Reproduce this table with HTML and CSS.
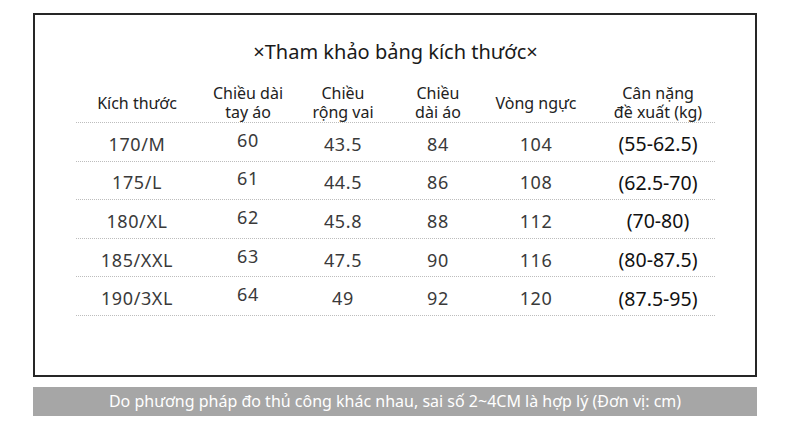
FILE: index.html
```html
<!DOCTYPE html>
<html lang="vi">
<head>
<meta charset="utf-8">
<title>Tham khảo bảng kích thước</title>
<link rel="stylesheet" href="styles.css">
</head>
<body>
<div class="page">
  <div class="card">
    <h1 class="title">×Tham khảo bảng kích thước×</h1>
    <div class="table">
      <div class="row head">
        <div class="cell">Kích thước</div>
        <div class="cell">Chiều dài<br>tay áo</div>
        <div class="cell">Chiều<br>rộng vai</div>
        <div class="cell">Chiều<br>dài áo</div>
        <div class="cell">Vòng ngực</div>
        <div class="cell last">Cân nặng<br>đề xuất (kg)</div>
      </div>
      <div class="row">
        <div class="cell">170/M</div><div class="cell up">60</div><div class="cell">43.5</div><div class="cell">84</div><div class="cell">104</div><div class="cell last">(55-62.5)</div>
      </div>
      <div class="row">
        <div class="cell">175/L</div><div class="cell up">61</div><div class="cell">44.5</div><div class="cell">86</div><div class="cell">108</div><div class="cell last">(62.5-70)</div>
      </div>
      <div class="row">
        <div class="cell">180/XL</div><div class="cell up">62</div><div class="cell">45.8</div><div class="cell">88</div><div class="cell">112</div><div class="cell last">(70-80)</div>
      </div>
      <div class="row">
        <div class="cell">185/XXL</div><div class="cell up">63</div><div class="cell">47.5</div><div class="cell">90</div><div class="cell">116</div><div class="cell last">(80-87.5)</div>
      </div>
      <div class="row">
        <div class="cell">190/3XL</div><div class="cell up">64</div><div class="cell">49</div><div class="cell">92</div><div class="cell">120</div><div class="cell last">(87.5-95)</div>
      </div>
    </div>
  </div>
  <div class="note">Do phương pháp đo thủ công khác nhau, sai số 2~4CM là hợp lý (Đơn vị: cm)</div>
</div>
</body>
</html>
```

FILE: styles.css
```css
html, body {
  margin: 0;
  padding: 0;
  background: #ffffff;
}
body {
  font-family: "Noto Sans", "Open Sans", "DejaVu Sans", sans-serif;
  color: #333;
}
.page {
  width: 724px;
  padding: 13px 0 0 33px;
  display: flex;
  flex-direction: column;
  gap: 10px;
}
.card {
  box-sizing: border-box;
  height: 364px;
  border: 2px solid #262626;
  padding: 22px 0 0 41px;
}
.title {
  margin: 0;
  width: 639px;
  text-align: center;
  font-size: 20px;
  font-weight: 400;
  line-height: 30px;
  color: #1a1a1a;
}
.table {
  width: 639px;
  margin-top: 7px;
}
.row {
  box-sizing: border-box;
  display: grid;
  grid-template-columns: 122px 100px 90px 100px 96px 131px;
  align-items: center;
  height: 38.6px;
  border-bottom: 1px dotted #bdbdbd;
  font-size: 18px;
  color: #3a3a3a;
  letter-spacing: 0.6px;
}
.row:not(.head) .cell {
  padding-top: 4px;
}
.row.head {
  height: 49px;
  font-size: 16px;
  line-height: 19px;
  color: #222;
  letter-spacing: 0;
}
.cell {
  text-align: center;
}
.row.head .cell {
  padding-top: 10px;
}
.row:not(.head) .cell.up {
  padding-top: 0;
  padding-bottom: 4px;
}
.cell.last {
  padding-left: 17px;
}
.row:not(.head) .cell.last {
  font-size: 19.5px;
  color: #111;
  letter-spacing: 0;
}
.note {
  height: 29px;
  background: #a6a6a6;
  color: #ffffff;
  font-size: 16px;
  line-height: 29px;
  text-align: center;
}
```
